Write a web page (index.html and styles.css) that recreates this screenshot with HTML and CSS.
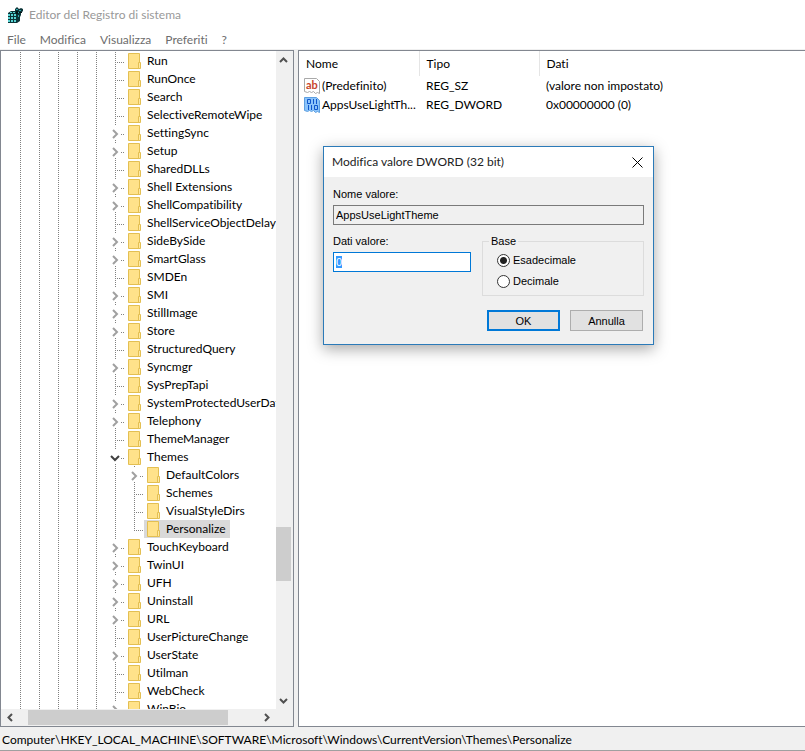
FILE: index.html
```html
<!DOCTYPE html>
<html lang="it">
<head>
    <meta charset="UTF-8">
    <meta name="viewport" content="width=device-width, initial-scale=1.0">
    <title>Editor del Registro di sistema</title>
    <link rel="stylesheet" href="styles.css">
</head>
<body>
    <header class="titlebar">
        <svg class="app-icon" width="17" height="16" viewBox="0 0 17 16">
            <path d="M1 6l3-2h4V2l2-2 2 2 2-1 2 1v2l-2 2v2l-1 2v4l-3 2H1z" fill="#0b3438"/>
            <path d="M1 7h2v2H1zM4 7h2v2H4zM1 10h2v2H1zM4 10h2v2H4zM1 13h2v2H1zM4 13h2v2H4zM7 7h2v2H7zM7 10h2v2H7zM7 13h2v2H7zM3 5h2v1H3zM6 5h2v1H6z" fill="#58d3d3"/>
            <path d="M9 2h2v1H9zM12 3h2v1h-2zM10 5h2v1h-2zM11 8h1v2h-1z" fill="#2fa5ac"/>
            <path d="M9 4h2v3H9zM12 5h3v1h-3z" fill="#051518"/>
        </svg>
        <span>Editor del Registro di sistema</span>
    </header>

    <nav class="menubar">
        <button>File</button>
        <button>Modifica</button>
        <button>Visualizza</button>
        <button>Preferiti</button>
        <button>?</button>
    </nav>

    <main class="panes">
        <section class="tree-pane">
            <div class="tree-view">
                <ul class="tree" id="tree"></ul>
            </div>
            <div class="scroll-v">
                <button aria-label="Su"><svg width="9" height="6" viewBox="0 0 9 6"><path d="M1 5l3.500-3.500L8 5"/></svg></button>
                <div class="track-v"><div class="thumb-v"></div></div>
                <button aria-label="Giù"><svg width="9" height="6" viewBox="0 0 9 6"><path d="M1 1l3.500 3.500L8 1"/></svg></button>
            </div>
            <div class="scroll-h">
                <button aria-label="Sinistra"><svg width="6" height="9" viewBox="0 0 6 9"><path d="M5 1L1.500 4.500 5 8"/></svg></button>
                <div class="track-h"><div class="thumb-h"></div></div>
                <button aria-label="Destra"><svg width="6" height="9" viewBox="0 0 6 9"><path d="M1 1l3.500 3.500L1 8"/></svg></button>
            </div>
        </section>

        <section class="value-pane">
            <table class="values">
                <thead>
                    <tr><th class="col-name">Nome</th><th class="col-type">Tipo</th><th>Dati</th></tr>
                </thead>
                <tbody>
                    <tr>
                        <td>
                            <div class="value-name">
                                <span class="value-icon string-icon">
                                    <svg width="16" height="16" viewBox="0 0 16 16"><path d="M.5.500h12l3 3v12l-2-1-2 1-2-2-2 1-2-1-2 1-3-1z"/></svg>
                                    <b>ab</b>
                                </span>
                                <span class="value-label">(Predefinito)</span>
                            </div>
                        </td>
                        <td>REG_SZ</td>
                        <td>(valore non impostato)</td>
                    </tr>
                    <tr>
                        <td>
                            <div class="value-name">
                                <span class="value-icon">
                                    <svg width="16" height="16" viewBox="0 0 16 16">
                                        <path d="M.5.500h12l3 3v12l-2-1-2 1-2-2-2 1-2-1-2 1-3-1z" fill="#8cc4fa" stroke="#5d9fe0"/>
                                        <path d="M3.500 2.500h3v4h-3zM9.500 2v5M12.500 2v5M4.500 8v5M7.500 8v5M10.500 8.500h3v4h-3z" fill="none" stroke="#0f56cc"/>
                                    </svg>
                                </span>
                                <span class="value-label">AppsUseLightTh...</span>
                            </div>
                        </td>
                        <td>REG_DWORD</td>
                        <td>0x00000000 (0)</td>
                    </tr>
                </tbody>
            </table>
        </section>
    </main>

    <footer class="statusbar">Computer\HKEY_LOCAL_MACHINE\SOFTWARE\Microsoft\Windows\CurrentVersion\Themes\Personalize</footer>

    <form class="dialog" role="dialog" aria-labelledby="dialogTitle">
        <div class="dialog-title">
            <span id="dialogTitle">Modifica valore DWORD (32 bit)</span>
            <button type="button" class="close-btn" aria-label="Chiudi">
                <svg width="11" height="11" viewBox="0 0 11 11"><path d="M.5.500l10 10M10.500.500l-10 10" stroke="#000"/></svg>
            </button>
        </div>
        <div class="dialog-body">
            <div class="field">
                <label for="valueName">Nome valore:</label>
                <input type="text" id="valueName" value="AppsUseLightTheme" readonly>
            </div>
            <div class="dialog-row">
                <div class="field">
                    <label for="valueData">Dati valore:</label>
                    <input type="text" id="valueData" class="active" value="0">
                </div>
                <fieldset>
                    <legend>Base</legend>
                    <label><input type="radio" name="base" checked>Esadecimale</label>
                    <label><input type="radio" name="base">Decimale</label>
                </fieldset>
            </div>
            <div class="dialog-buttons">
                <button type="button" class="button default">OK</button>
                <button type="button" class="button">Annulla</button>
            </div>
        </div>
    </form>

    <script src="script.js"></script>
</body>
</html>
```
FILE: styles.css
```css
* {
    box-sizing: border-box;
}

body {
    display: flex;
    flex-direction: column;
    height: 100vh;
    margin: 0;
    overflow: hidden;
    font-family: Lato, "Open Sans", sans-serif;
    font-size: 12px;
    font-variant-ligatures: none;
    line-height: 18px;
    color: #000;
    background-color: #f0f0f0;
}

button {
    padding: 0;
    border: none;
    background: none;
    font: inherit;
    font-variant-ligatures: none;
    color: inherit;
}

.titlebar {
    display: flex;
    align-items: center;
    gap: 5px;
    height: 30px;
    padding-left: 7px;
    color: #999;
    background-color: #fff;
}

.menubar {
    display: flex;
    gap: 14px;
    height: 19px;
    padding: 1px 7px 0;
    color: #6d6d6d;
    background-color: #fff;
}

.panes {
    display: flex;
    flex: 1;
    gap: 4px;
    min-height: 0;
    padding-top: 1px;
}

/* Key tree */
.tree-pane {
    display: grid;
    grid-template-columns: 1fr 17px;
    grid-template-rows: 1fr 17px;
    width: 294px;
    border: 1px solid #828790;
    background-color: #fff;
}

.tree-view {
    min-height: 0;
    overflow: hidden;
}

.tree {
    margin: 0;
    padding: 1px 0 0 10px;
    list-style: none;
}

.tree li {
    display: flex;
    height: 18px;
    white-space: nowrap;
}

.guide,
.branch {
    flex: none;
    width: 19px;
    background-repeat: no-repeat;
}

.guide {
    background-image: repeating-linear-gradient(#808080 0 1px, transparent 1px 2px);
    background-size: 1px 100%;
    background-position: 9px 0;
}

.branch {
    display: flex;
    align-items: center;
    justify-content: center;
    background-image:
        repeating-linear-gradient(#808080 0 1px, transparent 1px 2px),
        repeating-linear-gradient(to right, #808080 0 1px, transparent 1px 2px);
    background-size: 1px 100%, 11px 1px;
    background-position: 9px 0, 9px 10px;
}

.branch.last {
    background-size: 1px 10px, 11px 1px;
}

.branch svg {
    width: 12px;
    height: 14px;
    margin-right: 1px;
    background-color: #fff;
    fill: none;
    stroke: #a0a0a0;
    stroke-width: 2;
}

.branch.open svg {
    stroke: #404040;
}

.key {
    display: flex;
    align-items: center;
    gap: 6px;
    padding: 0 4px 0 3px;
}

.key svg {
    flex: none;
}

.key.selected {
    background-color: #d9d9d9;
}

/* Scrollbars */
.scroll-v,
.scroll-h {
    display: flex;
    background-color: #f0f0f0;
}

.scroll-v {
    flex-direction: column;
    padding-right: 2px;
}

.scroll-h {
    grid-column: 1 / 3;
    padding-right: 18px;
}

.scroll-v button,
.scroll-h button {
    display: flex;
    align-items: center;
    justify-content: center;
    flex: none;
    width: 17px;
    height: 17px;
}

.scroll-v button {
    width: 15px;
}

.scroll-v svg,
.scroll-h svg {
    fill: none;
    stroke: #505050;
    stroke-width: 2;
}

.track-v,
.track-h {
    display: flex;
    flex: 1;
}

.track-v {
    flex-direction: column;
}

.track-v::before {
    content: "";
    flex: 459;
}

.track-v::after {
    content: "";
    flex: 111;
}

.thumb-v {
    flex: 54;
    background-color: #cdcdcd;
}

.track-h {
    padding: 1px 0 1px 10px;
}

.thumb-h {
    width: 87%;
    background-color: #cdcdcd;
}

/* Value list */
.value-pane {
    flex: 1;
    min-width: 0;
    border: 1px solid #828790;
    border-right: none;
    background-color: #fff;
}

.values {
    width: 100%;
    table-layout: fixed;
    border-collapse: collapse;
}

.values th {
    height: 25px;
    padding: 0 7px;
    border-right: 1px solid #e5e5e5;
    font-weight: normal;
    text-align: left;
}

.values th:last-child {
    border-right: none;
}

.values td {
    height: 19px;
    padding: 0 7px;
    white-space: nowrap;
}

.values td:first-child {
    padding: 0 0 0 5px;
}

.col-name,
.col-type {
    width: 120px;
}

.value-name {
    display: flex;
    align-items: center;
    gap: 2px;
}

.value-icon {
    display: flex;
    flex: none;
    position: relative;
    width: 16px;
    height: 16px;
}

.string-icon path {
    fill: #fff;
    stroke: #a9a9a9;
}

.string-icon b {
    position: absolute;
    top: 1px;
    left: 2px;
    font-size: 11px;
    line-height: 12px;
    color: #c8452c;
}

.statusbar {
    height: 24px;
    padding: 4px 2px 0;
    white-space: nowrap;
    border-bottom: 1px solid #a0a0a0;
}

/* DWORD dialog */
.dialog {
    position: absolute;
    top: 146px;
    left: 323px;
    width: 331px;
    border: 1px solid #2b7ab8;
    background-color: #f0f0f0;
    box-shadow: 0 4px 14px rgba(0, 0, 0, 0.35);
}

.dialog-title {
    display: flex;
    align-items: center;
    justify-content: space-between;
    height: 30px;
    padding: 0 10px 0 8px;
    color: #222;
    background-color: #fff;
}

.close-btn {
    display: flex;
}

.dialog-body {
    padding: 10px 9px 13px;
    font-family: "Liberation Sans", Arial, sans-serif;
    font-size: 11px;
    line-height: 14px;
}

.field {
    display: flex;
    flex-direction: column;
    gap: 4px;
}

.field input {
    width: 100%;
    height: 20px;
    padding: 0 2px;
    border: 1px solid #7a7a7a;
    background-color: #f0f0f0;
    font: inherit;
    outline: none;
}

.field input.active {
    border-color: #0078d7;
    background-color: #fff;
}

.field input::selection {
    color: #fff;
    background-color: #3399ff;
}

.dialog-row {
    display: grid;
    grid-template-columns: 138px 1fr;
    gap: 11px;
    margin-top: 9px;
}

fieldset {
    display: flex;
    flex-direction: column;
    gap: 7px;
    min-width: 0;
    height: 62px;
    margin: 0;
    padding: 5px 14px 0;
    border: 1px solid #dcdcdc;
}

legend {
    margin-left: -8px;
    padding: 0 2px;
}

fieldset label {
    display: flex;
    align-items: center;
    gap: 3px;
}

fieldset input {
    appearance: none;
    width: 13px;
    height: 13px;
    margin: 0;
    border: 1px solid #333;
    border-radius: 50%;
    background-color: #fff;
}

fieldset input:checked {
    background-image: radial-gradient(circle, #222 3px, #fff 4px);
}

.dialog-buttons {
    display: flex;
    justify-content: flex-end;
    gap: 10px;
    margin-top: 14px;
    padding-right: 1px;
}

.button {
    width: 73px;
    height: 21px;
    border: 1px solid #adadad;
    background-color: #e1e1e1;
}

.button.default {
    border: 2px solid #0078d7;
}
```
FILE: script.js
```js
const tree = document.getElementById('tree');

// "+" marks a key with subkeys, "-" an open one, ">" a key inside Themes
const keys = [
    'Run', 'RunOnce', 'Search', 'SelectiveRemoteWipe', '+SettingSync', '+Setup',
    'SharedDLLs', '+Shell Extensions', '+ShellCompatibility', 'ShellServiceObjectDelayLoad',
    '+SideBySide', '+SmartGlass', 'SMDEn', '+SMI', '+StillImage', '+Store',
    'StructuredQuery', '+Syncmgr', 'SysPrepTapi', '+SystemProtectedUserData',
    '+Telephony', 'ThemeManager', '-Themes', '>+DefaultColors', '>Schemes',
    '>VisualStyleDirs', '>Personalize', '+TouchKeyboard', '+TwinUI', '+UFH',
    '+Uninstall', '+URL', 'UserPictureChange', '+UserState', 'Utilman', 'WebCheck', '+WinBio'
];

const folder = `<svg width="13" height="16" viewBox="0 0 13 16">
    <path d="M.5.500h11v15H.5z" fill="#ffe28a" stroke="#e3bf52"/>
    <path d="M10.500 9.500h2v6h-2z" fill="#ffe9a3" stroke="#e3bf52"/></svg>`;
const closedArrow = '<svg viewBox="0 0 12 14"><path d="M4 4l4 4-4 4"/></svg>';
const openArrow = '<svg viewBox="0 0 12 14"><path d="M2 6l4 4 4-4"/></svg>';

keys.forEach(key => {
    const nested = key.startsWith('>');
    const closed = key.includes('+');
    const open = key.startsWith('-');
    const name = key.replace(/^[>+-]+/, '');
    const selected = name === 'Personalize';

    const row = document.createElement('li');
    row.innerHTML = '<span class="guide"></span>'.repeat(nested ? 6 : 5) +
        `<span class="branch${open ? ' open' : ''}${selected ? ' last' : ''}">${closed ? closedArrow : open ? openArrow : ''}</span>` +
        `<button class="key${selected ? ' selected' : ''}">${folder}<span>${name}</span></button>`;
    tree.appendChild(row);
});

// The value being edited starts out selected
const valueData = document.getElementById('valueData');
valueData.focus();
valueData.select();
```
